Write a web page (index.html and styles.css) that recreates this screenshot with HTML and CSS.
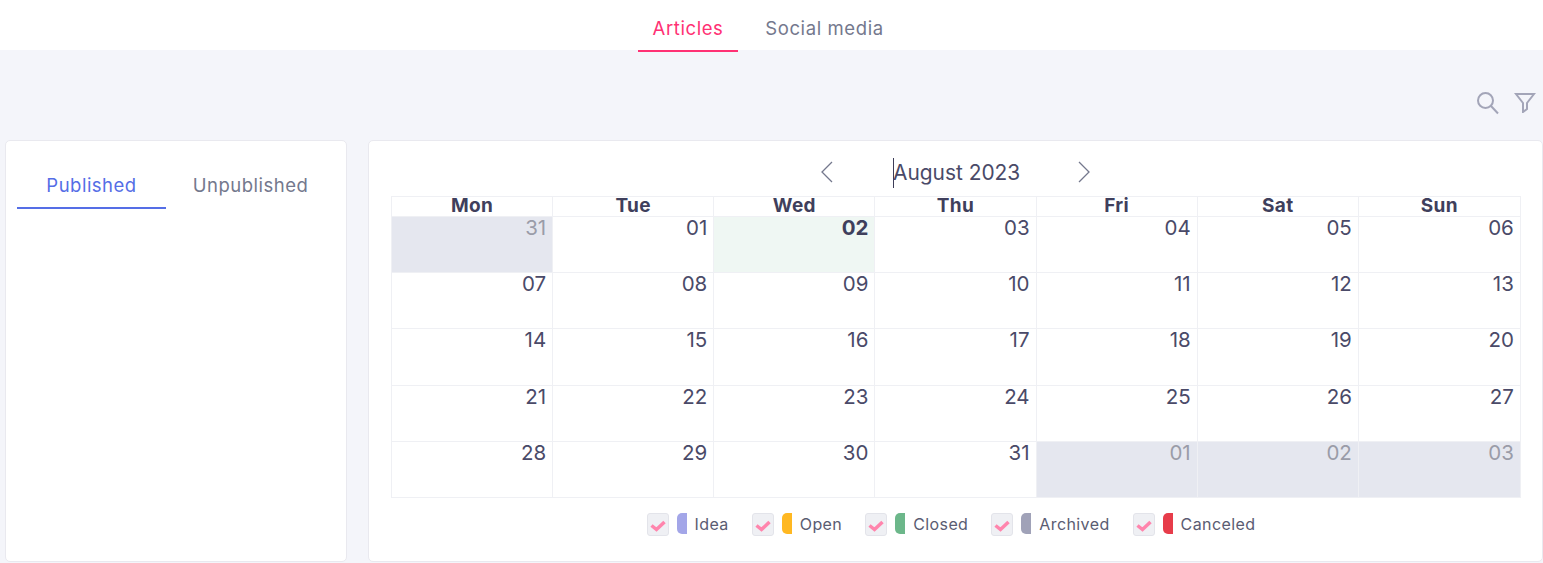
FILE: index.html
```html
<!DOCTYPE html>
<html lang="en">
<head>
    <meta charset="UTF-8">
    <title>Calendar</title>
    <link rel="stylesheet" href="styles.css">
</head>
<body>
    <nav class="top-tabs">
        <a class="top-tab active">Articles</a>
        <a class="top-tab">Social media</a>
    </nav>

    <div class="toolbar">
        <svg class="tool-icon" width="24" height="24" viewBox="0 0 24 24"><circle cx="9.500" cy="9.500" r="7.500"/><path d="M15 15l7 7.500"/></svg>
        <svg class="tool-icon" width="22" height="22" viewBox="0 0 22 22"><path d="M2 3h18l-7 9v6l-4 3v-9z"/></svg>
    </div>

    <main class="content">
        <section class="card side-card">
            <div class="side-tabs">
                <a class="side-tab active">Published</a>
                <a class="side-tab">Unpublished</a>
            </div>
        </section>

        <section class="card calendar-card">
            <div class="month-nav">
                <svg class="chevron" width="14" height="22" viewBox="0 0 14 22"><path d="M12 1L2 11l10 10"/></svg>
                <div class="month-title">August 2023</div>
                <svg class="chevron" width="14" height="22" viewBox="0 0 14 22"><path d="M2 1l10 10L2 21"/></svg>
            </div>

            <div class="calendar" id="calendar"></div>

            <div class="legend">
                <label class="legend-item"><span class="check"><svg width="16" height="12" viewBox="0 0 16 12"><path d="M1.500 5.500l5 4 8-7.500"/></svg></span><span class="swatch idea"></span>Idea</label>
                <label class="legend-item"><span class="check"><svg width="16" height="12" viewBox="0 0 16 12"><path d="M1.500 5.500l5 4 8-7.500"/></svg></span><span class="swatch open"></span>Open</label>
                <label class="legend-item"><span class="check"><svg width="16" height="12" viewBox="0 0 16 12"><path d="M1.500 5.500l5 4 8-7.500"/></svg></span><span class="swatch closed"></span>Closed</label>
                <label class="legend-item"><span class="check"><svg width="16" height="12" viewBox="0 0 16 12"><path d="M1.500 5.500l5 4 8-7.500"/></svg></span><span class="swatch archived"></span>Archived</label>
                <label class="legend-item"><span class="check"><svg width="16" height="12" viewBox="0 0 16 12"><path d="M1.500 5.500l5 4 8-7.500"/></svg></span><span class="swatch canceled"></span>Canceled</label>
            </div>
        </section>
    </main>

    <script>
        const dayNames = ['Mon', 'Tue', 'Wed', 'Thu', 'Fri', 'Sat', 'Sun'];
        const days = [['31', 'other']];
        for (let i = 1; i <= 31; i++) {
            days.push([String(i).padStart(2, '0'), i === 2 ? 'today' : '']);
        }
        ['01', '02', '03'].forEach(function (d) {
            days.push([d, 'other']);
        });

        const calendar = document.getElementById('calendar');
        dayNames.forEach(function (name) {
            const head = document.createElement('div');
            head.className = 'day-name';
            head.textContent = name;
            calendar.appendChild(head);
        });
        days.forEach(function (day) {
            const cell = document.createElement('div');
            cell.className = 'day ' + day[1];
            cell.textContent = day[0];
            calendar.appendChild(cell);
        });
    </script>
</body>
</html>
```
FILE: styles.css
```css
* {
    box-sizing: border-box;
}

body {
    font-family: 'Inter', sans-serif;
    background-color: #f4f5fa;
    color: #4a4a68;
    margin: 0;
    height: 563px;
    overflow: hidden;
}

.top-tabs {
    background-color: #fff;
    height: 50px;
    display: flex;
    justify-content: center;
    gap: 12px;
    padding-right: 6px;
}

.top-tab {
    height: 52px;
    padding-top: 17px;
    font-size: 18.500px;
    letter-spacing: 0.600px;
    text-align: center;
    color: #74788d;
}

.top-tab:first-child {
    width: 100px;
}

.top-tab:last-child {
    width: 149px;
}

.top-tab.active {
    color: #ff3174;
    border-bottom: 2px solid #ff3174;
}

.toolbar {
    height: 90px;
    display: flex;
    justify-content: flex-end;
    align-items: flex-start;
    gap: 14px;
    padding: 41px 7px 0 0;
}

.tool-icon {
    fill: none;
    stroke: #a3a5b8;
    stroke-width: 2;
}

.content {
    display: flex;
    gap: 21px;
    padding-left: 5px;
}

.card {
    background-color: #fff;
    border: 1px solid #e9e9ef;
    border-radius: 5px;
    height: 422px;
}

.side-card {
    width: 342px;
    padding: 23px 11px;
}

.side-tabs {
    display: flex;
}

.side-tab {
    width: 149px;
    height: 45px;
    padding-top: 10px;
    font-size: 18.500px;
    letter-spacing: 0.500px;
    text-align: center;
    color: #74788d;
}

.side-tab:last-child {
    width: 169px;
}

.side-tab.active {
    color: #556ee6;
    border-bottom: 2px solid #556ee6;
}

.calendar-card {
    width: 1175px;
    padding: 15px 21px 0 22px;
}

.month-nav {
    height: 40px;
    display: flex;
    justify-content: center;
    align-items: flex-start;
    padding-top: 5px;
    padding-right: 1px;
}

.month-title {
    width: 243px;
    margin-top: -3px;
    padding-left: 59px;
    height: 30px;
    font-size: 20.900px;
    line-height: 30px;
    color: #4a4a68;
    background: linear-gradient(#3d3d58, #3d3d58) 59px 0 / 1px 100% no-repeat;
}

.chevron {
    fill: none;
    stroke: #74788d;
    stroke-width: 1.300;
}

.calendar {
    display: grid;
    grid-template-columns: repeat(6, 161.150px) 162px;
    grid-template-rows: 20px 56px 56px 57px 56px 56px;
    border-top: 1px solid #eff0f4;
    border-left: 1px solid #eff0f4;
}

.day-name {
    border-right: 1px solid #eff0f4;
    border-bottom: 1px solid #eff0f4;
    font-size: 19px;
    font-weight: 700;
    letter-spacing: 0.300px;
    line-height: 17px;
    text-align: center;
    color: #3f3f5c;
}

.day {
    border-right: 1px solid #eff0f4;
    border-bottom: 1px solid #eff0f4;
    padding: 0 6px 0 0;
    font-size: 20.500px;
    line-height: 22px;
    text-align: right;
    color: #4a4a68;
}

.day.other {
    background-color: #e5e7ef;
    color: #9a9ca8;
}

.day.today {
    background-color: #eff7f3;
    color: #3f3f5c;
    font-weight: 700;
}

.legend {
    display: flex;
    justify-content: center;
    gap: 23px;
    margin-top: 15px;
    padding-right: 10px;
}

.legend-item {
    display: flex;
    align-items: flex-start;
    font-size: 16px;
    line-height: 23px;
    letter-spacing: 0.400px;
    color: #5a5c72;
}

.check {
    width: 22px;
    height: 23px;
    display: flex;
    align-items: center;
    justify-content: center;
    margin-right: 8px;
    padding-top: 2px;
    background-color: #eff0f4;
    border: 1px solid #e3e4ea;
    border-radius: 3px;
}

.check svg {
    fill: none;
    stroke: #ff85ad;
    stroke-width: 3.500;
}

.swatch {
    width: 10px;
    height: 21px;
    margin-right: 8px;
    border-radius: 5px 0 0 5px;
}

.swatch.idea { background-color: #a3a6e8; }
.swatch.open { background-color: #ffb822; }
.swatch.closed { background-color: #6cb78a; }
.swatch.archived { background-color: #a0a2b8; }
.swatch.canceled { background-color: #e73c4a; }
```
